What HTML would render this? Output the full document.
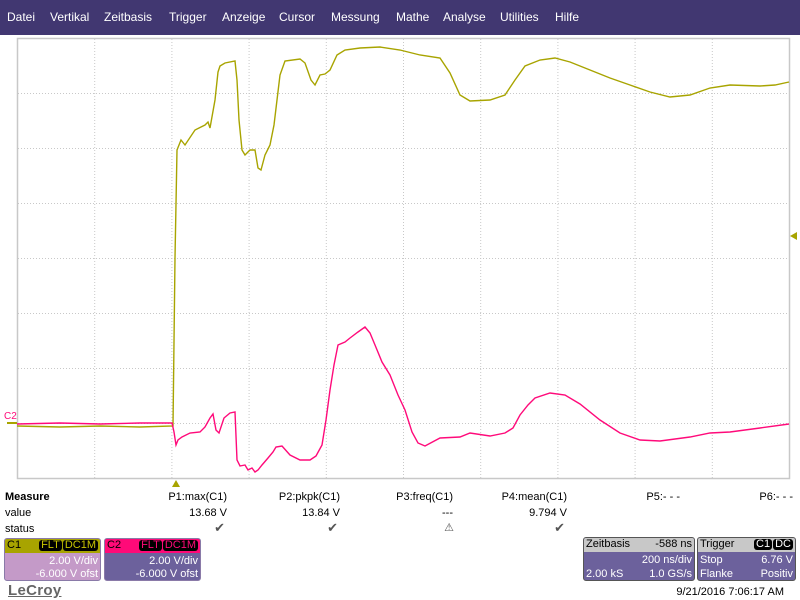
<!DOCTYPE html>
<html><head><meta charset="utf-8"><style>
*{margin:0;padding:0;box-sizing:border-box}
body{width:800px;height:600px;background:#fff;position:relative;overflow:hidden;font-family:"Liberation Sans",Arial,sans-serif;font-size:11px;color:#000}
#menu{position:absolute;left:0;top:0;width:800px;height:35px;background:#413771;color:#fff;font-size:12px}
#menu span{position:absolute;top:10px}
.t{position:absolute;white-space:nowrap}
.r{text-align:right}
.box{position:absolute;border:1px solid #555;border-radius:3px;overflow:hidden;font-size:11px}
.hd{height:14px;line-height:13px;padding:0 2px;position:relative}
.bd{position:absolute;left:0;right:0;top:14px;bottom:0;color:#fff}
.bd div{position:absolute;white-space:nowrap}
.tag{display:inline-block;border-radius:3px;padding:0 2px;line-height:11px;margin-top:1px}
</style></head><body>
<div id="menu">
<span style="left:7px">Datei</span><span style="left:50px">Vertikal</span><span style="left:104px">Zeitbasis</span><span style="left:169px">Trigger</span><span style="left:222px">Anzeige</span><span style="left:279px">Cursor</span><span style="left:331px">Messung</span><span style="left:396px">Mathe</span><span style="left:443px">Analyse</span><span style="left:500px">Utilities</span><span style="left:555px">Hilfe</span>
</div>
<svg width="800" height="490" style="position:absolute;left:0;top:0">
<g stroke="#c8c8c8" stroke-width="1" fill="none">
<rect x="17.5" y="38.5" width="772" height="440" stroke-width="1.5"/>
<g stroke-dasharray="1,2">
<path d="M94.7 39V478M171.9 39V478M249.1 39V478M326.3 39V478M403.5 39V478M480.7 39V478M557.9 39V478M635.1 39V478M712.3 39V478"/>
<path d="M18 93.5H789M18 148.5H789M18 203.5H789M18 258.5H789M18 313.5H789M18 368.5H789M18 423.5H789"/>
</g>
</g>
<polyline fill="none" stroke="#a8a400" stroke-width="1.4" points="17,426 60,427 100,426 140,427 173,426 175,258 177,150 181,140 185,145 195,130 205,125 208,122 210,128 215,100 218,72 220,66 225,63 235,61 237,80 239,120 242,150 245,155 250,150 255,150 258,168 261,170 265,155 270,145 274,125 277,100 280,75 285,61 300,59 305,63 311,80 315,85 320,75 325,74 330,70 337,55 345,50 360,48 380,47 400,50 420,55 440,58 450,73 460,95 470,101 490,100 505,95 515,80 525,66 540,60 555,58 570,62 590,70 610,78 630,85 650,92 670,97 690,95 710,88 730,85 760,86 775,85 789,82"/>
<polyline fill="none" stroke="#ff0a7a" stroke-width="1.4" points="17,424 60,423 100,424 140,423 172,423 174,432 176,445 178,440 182,437 190,433 200,432 205,427 210,418 213,414 216,430 219,433 224,418 230,413 235,412 237,460 240,466 245,465 248,470 252,468 255,472 258,470 262,465 268,458 273,452 276,447 282,446 290,455 300,460 310,460 316,456 322,445 326,420 330,390 334,365 338,345 345,342 350,338 358,332 365,327 370,333 375,345 382,362 390,375 398,395 405,410 412,432 418,443 425,446 440,438 460,437 470,433 490,436 505,433 513,428 520,415 528,405 535,398 550,393 565,395 580,404 600,420 620,433 640,440 660,441 690,437 710,433 730,432 760,428 789,424"/>
<text x="4" y="419" font-family="Liberation Sans" font-size="10" fill="#ff0a7a">C2</text>
<path d="M7 423H17" stroke="#a8a400" stroke-width="2"/>
<path d="M172 487L176 480L180 487Z" fill="#a8a400"/>
<path d="M790 236L797 232V240Z" fill="#a8a400"/>
</svg>
<div class="t" style="left:5px;top:491px;font-weight:bold">Measure</div>
<div class="t" style="left:5px;top:507px">value</div>
<div class="t" style="left:5px;top:523px">status</div>
<div class="t r" style="right:573px;top:491px">P1:max(C1)</div>
<div class="t r" style="right:573px;top:507px">13.68 V</div>
<div class="t r" style="right:575px;top:520px;color:#555;font-size:13px">✔</div>
<div class="t r" style="right:460px;top:491px">P2:pkpk(C1)</div>
<div class="t r" style="right:460px;top:507px">13.84 V</div>
<div class="t r" style="right:462px;top:520px;color:#555;font-size:13px">✔</div>
<div class="t r" style="right:347px;top:491px">P3:freq(C1)</div>
<div class="t r" style="right:347px;top:507px">---</div>
<div class="t r" style="right:346px;top:521px;color:#555;font-size:11px">⚠</div>
<div class="t r" style="right:233px;top:491px">P4:mean(C1)</div>
<div class="t r" style="right:233px;top:507px">9.794 V</div>
<div class="t r" style="right:235px;top:520px;color:#555;font-size:13px">✔</div>
<div class="t r" style="right:120px;top:491px">P5:- - -</div>
<div class="t r" style="right:7px;top:491px">P6:- - -</div>

<div class="box" style="left:4px;top:538px;width:97px;height:43px;background:#c49ac8;border-color:#8a7aa8">
<div class="hd" style="background:#a8a400;color:#000">C1<span style="position:absolute;right:2px;top:0"><span class="tag" style="background:#000;color:#c8c400">FLT</span><span class="tag" style="background:#000;color:#c8c400;margin-left:1px">DC1M</span></span></div>
<div class="bd"><div style="right:2px;top:2px">2.00 V/div</div><div style="right:2px;top:15px">-6.000 V ofst</div></div></div>
<div class="box" style="left:104px;top:538px;width:97px;height:43px;background:#6c619c;border-color:#8a7aa8">
<div class="hd" style="background:#ff0a78;color:#000">C2<span style="position:absolute;right:2px;top:0"><span class="tag" style="background:#000;color:#ff0a78">FLT</span><span class="tag" style="background:#000;color:#ff0a78;margin-left:1px">DC1M</span></span></div>
<div class="bd"><div style="right:2px;top:2px">2.00 V/div</div><div style="right:2px;top:15px">-6.000 V ofst</div></div></div>

<div class="box" style="left:583px;top:537px;width:112px;height:44px;background:#6c619c">
<div class="hd" style="background:#c8c8c8">Zeitbasis<span style="position:absolute;right:2px">-588 ns</span></div>
<div class="bd"><div style="right:2px;top:2px">200 ns/div</div><div style="left:2px;top:16px">2.00 kS</div><div style="right:2px;top:16px">1.0 GS/s</div></div></div>
<div class="box" style="left:697px;top:537px;width:99px;height:44px;background:#6c619c">
<div class="hd" style="background:#c8c8c8">Trigger<span style="position:absolute;right:2px;top:0"><span class="tag" style="background:#000;color:#fff">C1</span><span class="tag" style="background:#000;color:#fff;margin-left:1px">DC</span></span></div>
<div class="bd"><div style="left:2px;top:2px">Stop</div><div style="right:2px;top:2px">6.76 V</div><div style="left:2px;top:16px">Flanke</div><div style="right:2px;top:16px">Positiv</div></div></div>

<div class="t" style="left:8px;top:582px;font-size:15px;color:#666;text-decoration:underline;font-weight:bold;letter-spacing:0.3px">LeCroy</div>
<div class="t r" style="right:16px;top:586px;font-size:11px">9/21/2016 7:06:17 AM</div>
</body></html>
